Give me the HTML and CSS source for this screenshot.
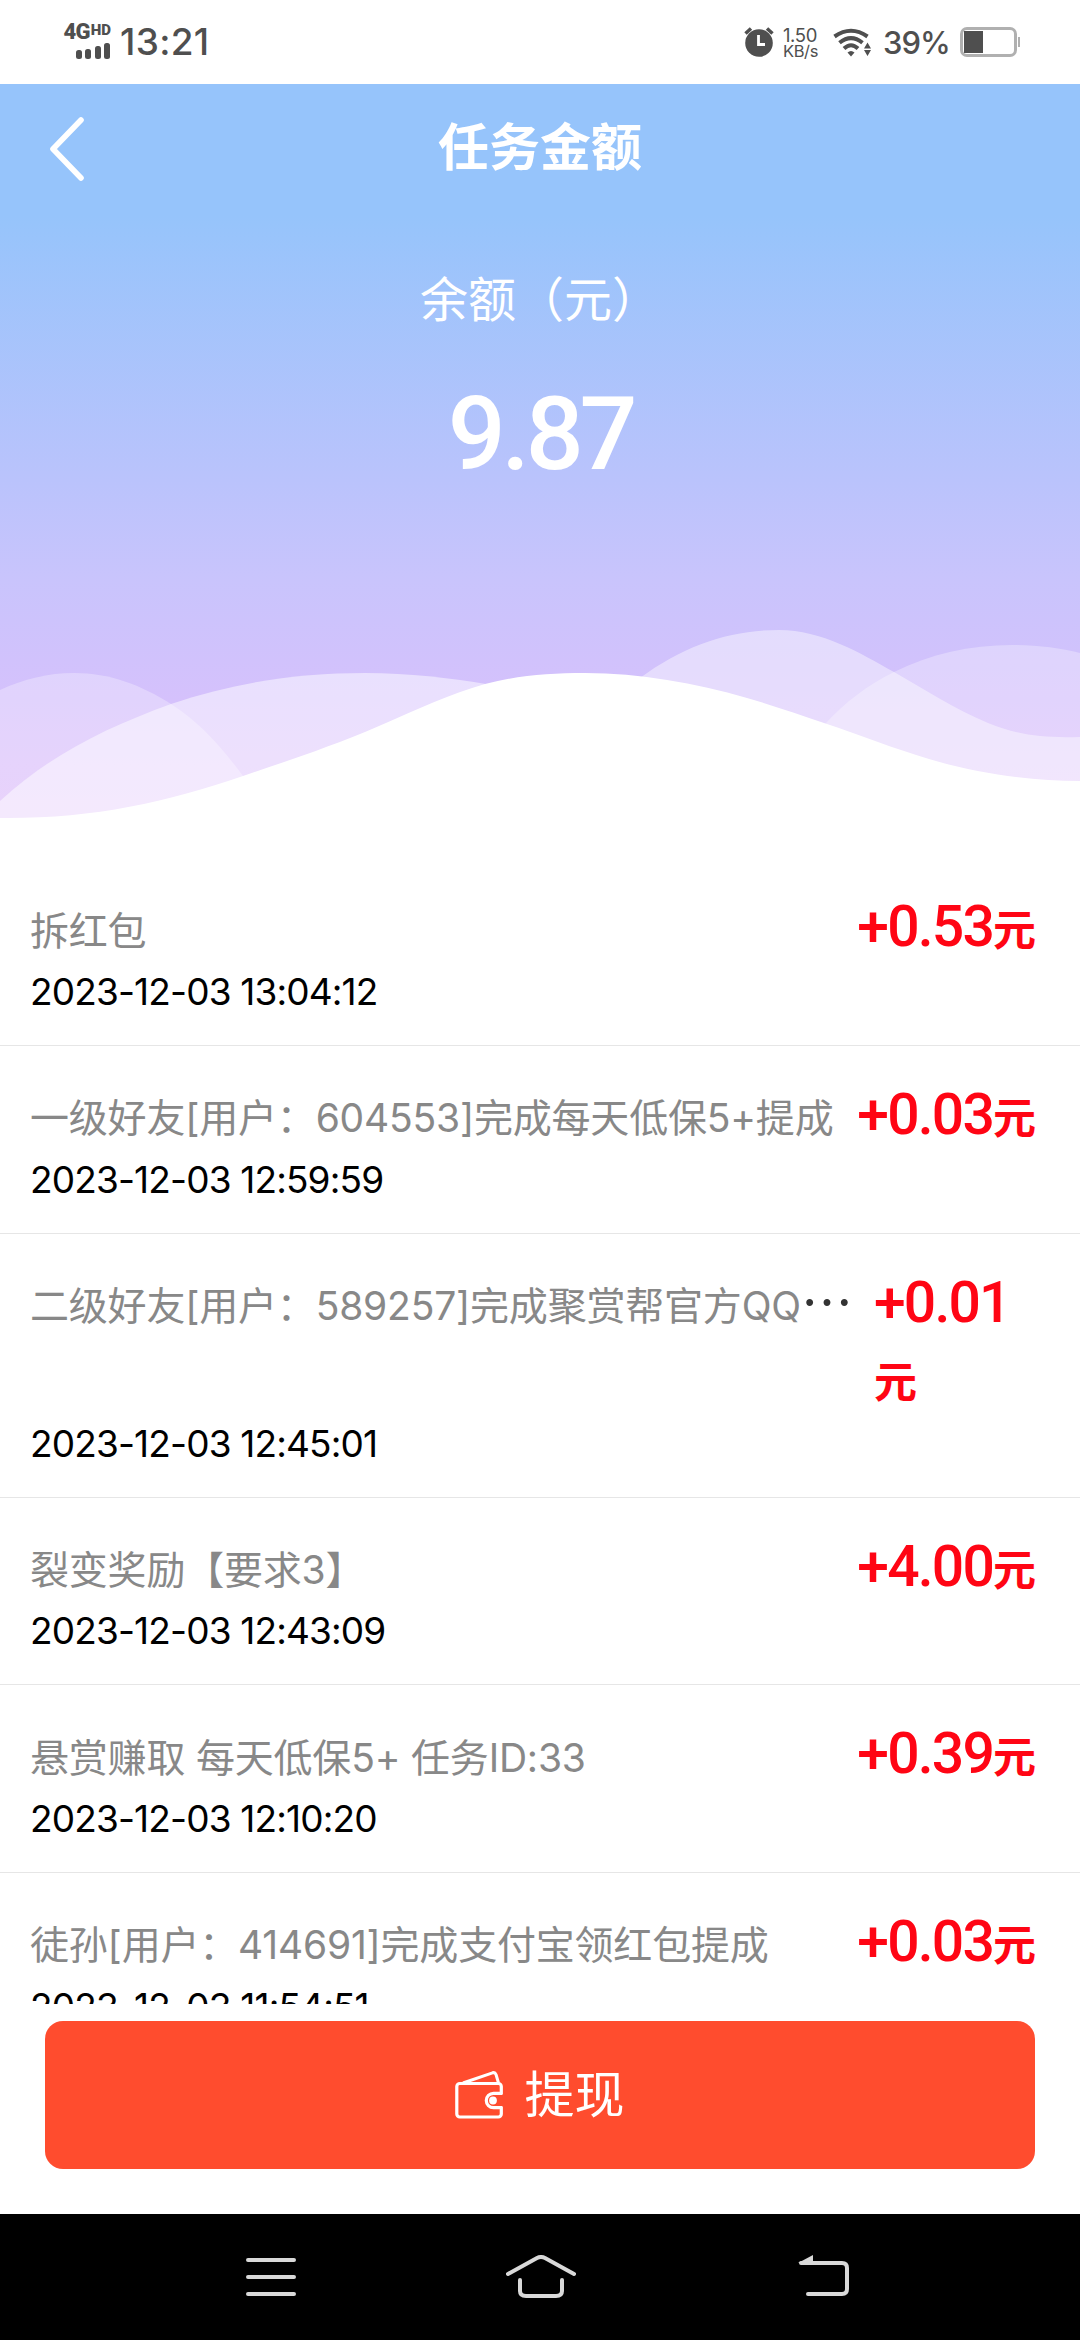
FILE: index.html
```html
<!DOCTYPE html>
<html lang="zh-CN">
<head>
<meta charset="utf-8">
<title>任务金额</title>
<link rel="stylesheet" href="styles.css">
</head>
<body>
<div class="screen">
  <div class="status">
    <div class="status-left">
      <div class="network">
        <div class="network-type">4G<sup>HD</sup></div>
        <div class="bars"><i class="bar b1"></i><i class="bar b2"></i><i class="bar b3"></i><i class="bar b4"></i></div>
      </div>
      <div class="clock">13:21</div>
    </div>
    <div class="status-right">
      <svg class="alarm" width="30" height="30" viewBox="0 0 30 30">
        <circle cx="15" cy="16" r="13.8" fill="#4f4f4f"/>
        <path d="M1.5 6.5 7 1.5M28.500 6.500 23 1.500" stroke="#4f4f4f" stroke-width="3.500" fill="none"/>
        <path d="M14.500 8v9.500h6.500" stroke="#fff" stroke-width="2.800" fill="none"/>
      </svg>
      <div class="speed"><span>1.50</span><span class="unit">KB/s</span></div>
      <svg class="wifi" width="38" height="29" viewBox="0 0 38 29">
        <g fill="none" stroke="#4f4f4f" stroke-width="4">
          <path d="M1.500 8.500Q18 -3 34.500 8.500"/>
          <path d="M6.500 14.800Q18 5.500 29.500 14.800"/>
          <path d="M11 20.500Q18 14 25 20.500"/>
        </g>
        <path d="M14.500 24.500Q18 21.500 21.500 24.500L18 28.500Z" fill="#4f4f4f"/>
        <path d="M34.500 14.500 38 20.500H31ZM34.500 28 38 22H31Z" fill="#4f4f4f"/>
      </svg>
      <div class="percent">39%</div>
      <div class="battery"><div class="charge"></div></div>
      <div class="nub"></div>
    </div>
  </div>

  <header class="hero">
    <div class="titlebar">
      <svg class="back" width="36" height="66" viewBox="0 0 36 66"><path d="M32 4 4 33 32 62" fill="none" stroke="#fff" stroke-width="5.600" stroke-linecap="round" stroke-linejoin="round"/></svg>
      <h1>任务金额</h1>
    </div>
    <div class="label">余额（元）</div>
    <div class="balance">9.87</div>
    <svg class="waves" width="1080" height="200" viewBox="0 620 1080 200">
      <path fill="#fff" fill-opacity=".3" d="M0 690C24 679 48 673 74 673 110 673 141 685 171 704 200 723 220 745 243 776V820H0Z"/>
      <path fill="#fff" fill-opacity=".5" d="M0 801C50 755 105 728 171 704 235 682 300 673 365 673 410 673 450 678 486 684V820H0Z"/>
      <path fill="#fff" fill-opacity=".43" d="M640 678C685 645 730 630 779 630 822 630 860 653 894 672 925 690 955 709 988 723 1020 736 1045 738 1080 737V820H640Z"/>
      <path fill="#fff" fill-opacity=".3" d="M825 724C845 702 868 685 894 672 930 654 970 645 1012 645 1038 645 1060 648 1080 653V820H825Z"/>
      <path fill="#fff" d="M0 818C90 819 165 803 243 776 290 760 330 747 379 726 420 708 450 694 485 684 520 675 550 673 585 673 640 673 695 683 747 698 775 706 800 715 824 723 860 735 895 749 929 759 975 773 1030 781 1080 781V820H0Z"/>
    </svg>
  </header>

  <main class="list">
    <div class="item">
      <div class="line"><div class="name">拆红包</div><div class="amount">+0.53<b>元</b></div></div>
      <div class="date">2023-12-03 13:04:12</div>
    </div>
    <div class="item">
      <div class="line"><div class="name">一级好友[用户：604553]完成每天低保5+提成</div><div class="amount">+0.03<b>元</b></div></div>
      <div class="date">2023-12-03 12:59:59</div>
    </div>
    <div class="item">
      <div class="line"><div class="name">二级好友[用户：589257]完成聚赏帮官方QQ<span class="more">⋯</span></div><div class="amount wrapped">+0.01<b>元</b></div></div>
      <div class="date">2023-12-03 12:45:01</div>
    </div>
    <div class="item">
      <div class="line"><div class="name">裂变奖励【要求3】</div><div class="amount">+4.00<b>元</b></div></div>
      <div class="date">2023-12-03 12:43:09</div>
    </div>
    <div class="item">
      <div class="line"><div class="name">悬赏赚取 每天低保5+ 任务ID:33</div><div class="amount">+0.39<b>元</b></div></div>
      <div class="date">2023-12-03 12:10:20</div>
    </div>
    <div class="item">
      <div class="line"><div class="name">徒孙[用户：414691]完成支付宝领红包提成</div><div class="amount">+0.03<b>元</b></div></div>
      <div class="date">2023-12-03 11:54:51</div>
    </div>
  </main>

  <footer class="action">
    <button class="withdraw">
      <svg width="50" height="50" viewBox="0 0 50 50" fill="none" stroke="#fff" stroke-width="3.200" stroke-linejoin="round">
        <path d="M48.500 23.300H39.500a7.200 7.200 0 0 0 0 14.400H48.500M47.300 24V16.500a3 3 0 0 0-3-3H5.800a3 3 0 0 0-3 3V44a3 3 0 0 0 3 3H44.300a3 3 0 0 0 3-3V37"/>
        <path d="M9 13 38.500 2.800Q41 2 42 4.500L44.500 13" stroke-width="3"/>
        <circle cx="39" cy="30.500" r="3.900" fill="#fff" stroke="none"/>
      </svg>
      <span>提现</span>
    </button>
  </footer>

  <nav class="nav">
    <svg width="50" height="44" viewBox="0 0 50 44" stroke="#d9d9d9" stroke-width="4" stroke-linecap="round"><path d="M2 5H48M2 22H48M2 39H48"/></svg>
    <svg class="home" width="70" height="44" viewBox="0 0 70 44" fill="none" stroke="#d9d9d9" stroke-width="4" stroke-linecap="round"><path d="M2 19 31 3Q35 1 39 3L68 19M14 25V36Q14 41 20 41H50Q56 41 56 36V25"/></svg>
    <svg width="52" height="44" viewBox="0 0 52 44" fill="none" stroke="#d9d9d9" stroke-width="4" stroke-linecap="round"><path d="M3 8H44Q49 8 49 13V34Q49 39 44 39H10"/><path d="M0 8 15 0V8Z" fill="#d9d9d9" stroke="none"/></svg>
  </nav>
</div>
</body>
</html>
```
FILE: styles.css
```css
* { box-sizing: border-box; }
body { margin: 0; background: #fff; font-family: Inter, "Noto Sans CJK SC", sans-serif; }
.screen { width: 1080px; height: 2340px; display: flex; flex-direction: column; overflow: hidden; }
svg { display: block; flex: none; }

/* status bar */
.status { height: 84px; flex: none; display: flex; justify-content: space-between; align-items: center; padding: 0 60px 0 62px; color: #4f4f4f; }
.status-left, .status-right { display: flex; align-items: center; }
.network { width: 49px; height: 34px; display: flex; flex-direction: column; justify-content: space-between; align-items: flex-end; margin-right: 9px; }
.network-type { display: flex; align-items: flex-start; font: 900 22px/14px Roboto, sans-serif; letter-spacing: -.8px; white-space: nowrap; }
.network-type sup { font-size: 15px; line-height: 10px; letter-spacing: 0; margin-left: 1px; }
.bars { display: flex; align-items: flex-end; gap: 3.500px; height: 16px; margin-right: 1px; }
.bar { width: 6px; border-radius: 2.500px; background: #4f4f4f; }
.b1 { height: 9px; }
.b2 { height: 10px; }
.b3 { height: 13px; }
.b4 { height: 16px; }
.clock { font-size: 37px; line-height: 44px; font-weight: 500; letter-spacing: .3px; }
.alarm { margin-right: 9px; }
.speed { width: 38px; display: flex; flex-direction: column; font-size: 18.500px; line-height: 18px; letter-spacing: -.4px; margin-right: 12px; }
.unit { font-size: 16.500px; line-height: 15px; letter-spacing: -.4px; }
.wifi { margin-right: 12px; }
.percent { width: 65px; font-size: 31px; font-weight: 500; letter-spacing: -1px; line-height: 40px; margin: 2px 12px 0 0; }
.battery { width: 57px; height: 30px; border: 3px solid #b0b0b0; border-radius: 7px; padding: 1px; }
.charge { width: 19px; height: 22px; background: #4f4f4f; }
.nub { width: 2px; height: 10px; margin-left: 1px; background: #b0b0b0; }

/* balance header */
.hero { height: 736px; flex: none; display: flex; flex-direction: column; align-items: center; color: #fff; background: linear-gradient(#96c4fb 0, #96c4fb 132px, #bac3fc 396px, #c9c4fc 496px, #d5c1fc 616px, #e0bffa 736px); }
.titlebar { width: 100%; height: 132px; display: grid; grid-template-columns: 1fr auto 1fr; align-items: center; padding-bottom: 3px; }
.back { margin-left: 49px; }
h1 { margin: 0; font-size: 51px; line-height: 76px; font-weight: 700; padding-bottom: 2px; }
.label { margin-top: 48px; font-size: 48px; line-height: 72px; }
.balance { margin-top: 38px; padding-left: 1px; font: 500 102px/120px Roboto, sans-serif; letter-spacing: -4.200px; }
.waves { margin-top: auto; }

/* records */
.list { height: 1184px; flex: none; overflow: hidden; padding-top: 38.400px; }
.item { padding: 31px 44px 27px 30px; border-bottom: 1px solid #e6e6e6; }
.line { display: flex; justify-content: space-between; align-items: flex-start; }
.name { height: 76px; font-size: 39px; line-height: 58px; padding-top: 12.500px; color: #888; white-space: nowrap; letter-spacing: -.2px; }
.more { color: #333; font-size: 52px; line-height: 1; vertical-align: -2px; }
.amount { font: 500 57px/76.600px Roboto, "Noto Sans CJK SC", sans-serif; letter-spacing: -1.800px; color: #ff0514; white-space: nowrap; }
.amount b { font-size: 43px; line-height: 1; font-weight: 700; letter-spacing: 0; }
.wrapped { width: 162px; white-space: normal; }
.date { font-size: 37px; line-height: 52px; letter-spacing: -.850px; color: #000; }

/* bottom button and system navigation */
.action { height: 210px; flex: none; padding: 17px 45px 45px; background: #fff; }
.withdraw { width: 100%; height: 148px; display: flex; align-items: center; justify-content: center; gap: 21px; padding: 0 8px 0 6px; border: 0; border-radius: 18px; background: #ff4c2e; color: #fff; font: 400 50px/74px "Noto Sans CJK SC", sans-serif; }
.withdraw span { padding-bottom: 8px; }
.nav { height: 126px; flex: none; display: flex; justify-content: space-between; align-items: center; padding: 0 230px 0 246px; background: #000; }
.home { margin-right: 12px; }
```
